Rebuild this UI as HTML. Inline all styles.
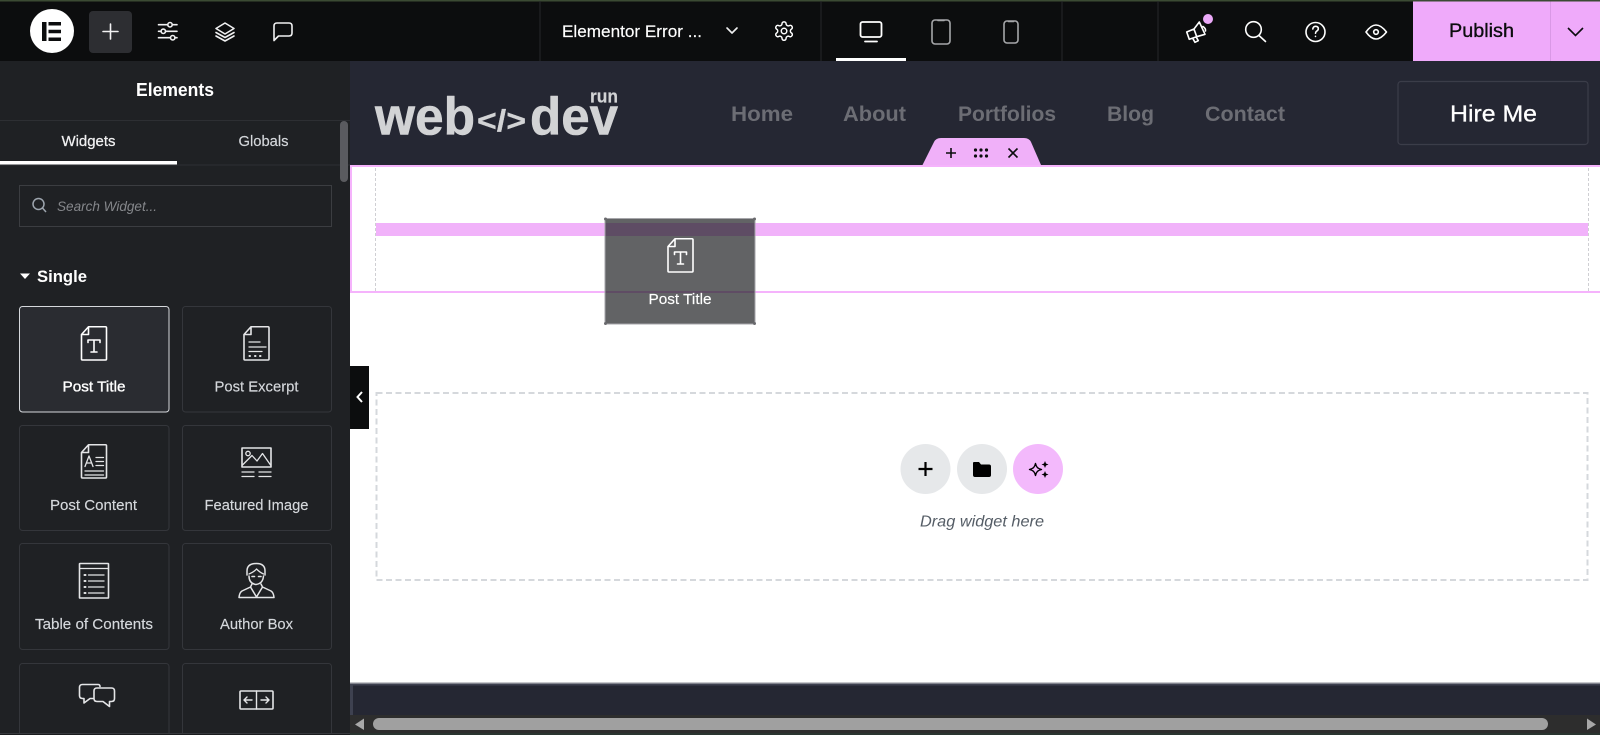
<!DOCTYPE html>
<html><head><meta charset="utf-8"><title>Elementor</title>
<style>
html,body{margin:0;padding:0;background:#fff;width:1600px;height:735px;overflow:hidden}
svg{display:block}
text{font-family:"Liberation Sans",sans-serif}
.i{fill:none;stroke:#e4e5e7;stroke-width:1.6;stroke-linecap:round;stroke-linejoin:round}
.t{fill:#1f2124;stroke:#34363b;stroke-width:1}
.l{font-size:15px;fill:#d5d8dc;text-anchor:middle;stroke:#d5d8dc;stroke-width:.15px}
.n{font-size:21px;font-weight:bold;fill:#6c6d74}
.logo{font-weight:bold;fill:#d2d3d5;stroke:#d2d3d5;stroke-width:.6px;stroke-linejoin:round}
</style></head><body>
<svg width="1600" height="735" viewBox="0 0 1600 735" xmlns="http://www.w3.org/2000/svg">
<defs>
<path id="doc" d="M8 .75H25a1 1 0 0 1 1 1V33a1 1 0 0 1-1 1H2a1 1 0 0 1-1-1V8.500ZM8 .75V8.500H1"/>
<path id="tt" d="M7.500 16.500V14H19.500V16.500M13.500 14V26M10.500 26H16.500"/>
</defs>

<!-- canvas -->
<rect width="1600" height="735" fill="#fff"/>
<rect x="350" y="61" width="1250" height="104" fill="#252733"/>

<!-- logo -->
<text class="logo" x="375" y="134.500" font-size="53" textLength="100" lengthAdjust="spacingAndGlyphs">web</text>
<text class="logo" x="477" y="131" font-size="31" textLength="49" lengthAdjust="spacingAndGlyphs" style="stroke-width:.3px">&lt;/&gt;</text>
<text class="logo" x="530" y="134.500" font-size="53" textLength="88" lengthAdjust="spacingAndGlyphs">dev</text>
<text class="logo" x="590" y="102.500" font-size="18" textLength="28" lengthAdjust="spacingAndGlyphs" style="stroke-width:.2px">run</text>

<!-- nav -->
<text class="n" x="731" y="121" textLength="62" lengthAdjust="spacingAndGlyphs">Home</text>
<text class="n" x="843" y="121" textLength="63" lengthAdjust="spacingAndGlyphs">About</text>
<text class="n" x="958" y="121" textLength="98" lengthAdjust="spacingAndGlyphs">Portfolios</text>
<text class="n" x="1107" y="121" textLength="47" lengthAdjust="spacingAndGlyphs">Blog</text>
<text class="n" x="1205" y="121" textLength="80" lengthAdjust="spacingAndGlyphs">Contact</text>
<rect x="1398" y="81.500" width="190" height="63" rx="3" fill="none" stroke="#3b3d49" stroke-width="1.200"/>
<text x="1450" y="121.500" font-size="23" fill="#fff" stroke="#fff" stroke-width=".3" textLength="87" lengthAdjust="spacingAndGlyphs">Hire Me</text>

<!-- section -->
<rect x="350" y="165" width="1250" height="2" fill="#f5b3fc"/>
<rect x="350" y="165" width="2" height="128" fill="#f5b3fc"/>
<rect x="350" y="291" width="1250" height="2" fill="#f5b3fc"/>
<path d="M375.500 168V291M1588.500 168V291" stroke="#cfcfd3" stroke-width="1" stroke-dasharray="3 2"/>
<rect x="376" y="223" width="1212" height="13" fill="#f1b2fa"/>
<path d="M922.500 165L934 142Q936 138 941 138H1024Q1029 138 1031 142L1041 165Z" fill="#f0b0f9"/>
<path d="M951 148V158M946 153H956M1008.500 148.500L1017.500 157.500M1017.500 148.500L1008.500 157.500" stroke="#0c0d0e" stroke-width="1.600" fill="none"/>
<g fill="#0c0d0e"><circle cx="975.500" cy="150" r="1.600"/><circle cx="981" cy="150" r="1.600"/><circle cx="986.500" cy="150" r="1.600"/><circle cx="975.500" cy="156" r="1.600"/><circle cx="981" cy="156" r="1.600"/><circle cx="986.500" cy="156" r="1.600"/></g>

<!-- empty section -->
<rect x="376.500" y="393" width="1211" height="187" fill="none" stroke="#d5d8dc" stroke-width="2" stroke-dasharray="6 3.500"/>
<circle cx="925.500" cy="469" r="25" fill="#e6e8ea"/>
<circle cx="982" cy="469" r="25" fill="#e6e8ea"/>
<circle cx="1038" cy="469" r="25" fill="#f3b9fc"/>
<path d="M925.500 462V476M918.500 469H932.500" stroke="#000" stroke-width="2.200" fill="none"/>
<path d="M973 463a1 1 0 0 1 1-1h5l2 2.500h8a2 2 0 0 1 2 2V475a2 2 0 0 1-2 2H975a2 2 0 0 1-2-2Z" fill="#000"/>
<path d="M1035.500 463.500C1036.300 467 1037.500 468.500 1041.500 469.500C1037.500 470.500 1036.300 472 1035.500 475.500C1034.700 472 1033.500 470.500 1029.500 469.500C1033.500 468.500 1034.700 467 1035.500 463.500Z" fill="none" stroke="#000" stroke-width="1.400" stroke-linejoin="round"/>
<path d="M1045 461l1 2.500 2.500 1-2.500 1-1 2.500-1-2.500-2.500-1 2.500-1ZM1045 471l1 2.500 2.500 1-2.500 1-1 2.500-1-2.500-2.500-1 2.500-1Z" fill="#000"/>
<text x="982" y="526.500" font-size="16" font-style="italic" fill="#555d66" text-anchor="middle" textLength="124" lengthAdjust="spacingAndGlyphs">Drag widget here</text>

<!-- bottom -->
<rect x="350" y="682" width="1250" height="33" fill="#252733"/>
<rect x="350" y="682" width="1250" height="1.500" fill="#c7c8cc"/>
<rect x="350" y="683.500" width="1250" height="2" fill="#3e4150"/>
<rect x="350" y="683.500" width="3" height="31.500" fill="#3e4150"/>
<rect x="350" y="715" width="1250" height="18" fill="#2d2d2d"/>
<rect x="373" y="718" width="1175" height="12" rx="6" fill="#a0a0a0"/>
<path d="M364 718.500V730L355 724.500Z" fill="#a8a8a8"/>
<path d="M1587 718.500V730L1596 724.500Z" fill="#a8a8a8"/>
<rect x="350" y="733" width="1250" height="2" fill="#2a3530"/>

<!-- ghost -->
<rect x="605" y="218.500" width="150" height="105.500" rx="2" fill="#1f2124" fill-opacity=".7" stroke="#a6a6aa" stroke-width="1"/>
<g fill="#6a6a6e"><circle cx="605.500" cy="219" r="1.500"/><circle cx="754.500" cy="219" r="1.500"/><circle cx="605.500" cy="323.500" r="1.500"/><circle cx="754.500" cy="323.500" r="1.500"/></g>
<g class="i" transform="translate(667 238)" style="stroke:#fff"><use href="#doc"/><use href="#tt"/></g>
<text class="l" x="680" y="304" textLength="63" lengthAdjust="spacingAndGlyphs" style="fill:#fff;stroke:#fff">Post Title</text>

<!-- top bar -->
<rect width="1600" height="61" fill="#0c0d0e"/>
<rect width="1600" height="1.500" fill="#3b4a33"/>
<path d="M540 1V61M821 1V61M1062 1V61M1158 1V61" stroke="#26282b" stroke-width="1"/>
<circle cx="52" cy="31" r="22" fill="#fff"/>
<path d="M42 22h4.500v19H42ZM48.500 22H61v3.500H48.500ZM48.500 29.700H61v3.600H48.500ZM48.500 37.500H61V41H48.500Z" fill="#0c0d0e"/>
<rect x="89" y="11" width="43" height="42" rx="4" fill="#2d2e32"/>
<path d="M110.500 24V39M103 31.500H118" class="i" style="stroke:#f2f2f3"/>
<g class="i" style="stroke:#f0f0f1">
<path d="M158.500 24.700H167.500M172.500 24.700H177M158.500 31.300H161M165.700 31.300H177M158.500 37.700H170.300M175 37.700H177"/>
<circle cx="170" cy="24.700" r="2.200"/><circle cx="163.300" cy="31.300" r="2.200"/><circle cx="172.700" cy="37.700" r="2.200"/>
<path d="M225 23L234 28.500L225 34L216 28.500ZM216 32.500L225 37.500L234 32.500M216 36L225 41L234 36"/>
<path d="M274 40.500V26Q274 23 277 23H289Q292 23 292 26V33Q292 36 289 36H278.500Z"/>
<path d="M727 28L732 33L737 28"/>
</g>
<text x="562" y="37" font-size="17" fill="#fff" stroke="#fff" stroke-width=".15" textLength="140" lengthAdjust="spacingAndGlyphs">Elementor Error ...</text>
<g class="i" transform="translate(773 20) scale(.92)" style="stroke:#fff"><path d="M12.220 2h-.44a2 2 0 0 0-2 2v.18a2 2 0 0 1-1 1.730l-.43.25a2 2 0 0 1-2 0l-.15-.08a2 2 0 0 0-2.730.73l-.22.38a2 2 0 0 0 .73 2.730l.15.1a2 2 0 0 1 1 1.720v.51a2 2 0 0 1-1 1.740l-.15.09a2 2 0 0 0-.73 2.730l.22.38a2 2 0 0 0 2.730.73l.15-.08a2 2 0 0 1 2 0l.43.25a2 2 0 0 1 1 1.730V20a2 2 0 0 0 2 2h.44a2 2 0 0 0 2-2v-.18a2 2 0 0 1 1-1.730l.43-.25a2 2 0 0 1 2 0l.15.08a2 2 0 0 0 2.730-.73l.22-.39a2 2 0 0 0-.73-2.730l-.15-.08a2 2 0 0 1-1-1.740v-.5a2 2 0 0 1 1-1.740l.15-.09a2 2 0 0 0 .73-2.730l-.22-.38a2 2 0 0 0-2.730-.73l-.15.08a2 2 0 0 1-2 0l-.43-.25a2 2 0 0 1-1-1.730V4a2 2 0 0 0-2-2z"/><circle cx="12" cy="12" r="3"/></g>
<!-- devices -->
<g class="i" style="stroke:#fff;stroke-width:1.800"><rect x="860.500" y="22" width="21" height="15" rx="2"/><path d="M865 41.500H877"/></g>
<rect x="836" y="58" width="70" height="3" fill="#fff"/>
<g class="i" style="stroke:#a6a7aa"><rect x="932" y="20" width="18" height="24" rx="3"/><path d="M938 20.500H944"/><rect x="1004" y="21" width="14" height="22" rx="3"/><path d="M1008.500 21.500H1013.500"/></g>
<!-- right icons -->
<g class="i" style="stroke:#fff">
<path d="M1186.700 32L1194 29L1196.700 36.700L1189.300 39.300ZM1194 29L1199.300 22L1205 34.300L1196.700 36.700M1192.700 38.300L1195 42.300L1198.300 40.700L1196 36.700M1203 26.500Q1206 28.500 1205.500 31"/>
<circle cx="1253.500" cy="29.500" r="7.800"/><path d="M1259 35.500L1265.500 41.500"/>
<circle cx="1315.500" cy="32" r="9.500"/><path d="M1312.800 29Q1313.300 26.300 1315.500 26.300Q1318.300 26.300 1318.300 28.800Q1318.300 30.300 1316.500 31.300Q1315.500 32 1315.500 33.200"/><path d="M1315.500 36.300V36.400"/>
<path d="M1366 32Q1371 25 1376 25Q1381 25 1386.500 32Q1381 39 1376 39Q1371 39 1366 32Z"/><circle cx="1376" cy="32" r="2.300"/>
</g>
<circle cx="1208" cy="19" r="5" fill="#eba9f8"/>
<rect x="1413" y="1.500" width="187" height="59.500" fill="#efaafa"/>
<rect x="1550" y="1.500" width="1" height="59.500" fill="#d998e6"/>
<text x="1449" y="37" font-size="19" fill="#0c0d0e" stroke="#0c0d0e" stroke-width=".35" textLength="65" lengthAdjust="spacingAndGlyphs">Publish</text>
<path d="M1568 28L1575.500 35.500L1583 28" fill="none" stroke="#0c0d0e" stroke-width="1.600"/>

<!-- side panel -->
<rect x="0" y="61" width="350" height="674" fill="#1f2124"/>
<text x="175" y="96" font-size="18" font-weight="bold" fill="#fff" text-anchor="middle" textLength="78" lengthAdjust="spacingAndGlyphs">Elements</text>
<rect y="120" width="350" height="1" fill="#2d2f33"/>
<rect y="164.500" width="350" height="1" fill="#2d2f33"/>
<rect y="161" width="177" height="3.500" fill="#fff"/>
<text x="88.500" y="146" font-size="15" fill="#f1f1f2" stroke="#f1f1f2" stroke-width=".25" text-anchor="middle" textLength="54" lengthAdjust="spacingAndGlyphs">Widgets</text>
<text x="263.500" y="146" font-size="15" fill="#d5d8dc" stroke="#d5d8dc" stroke-width=".15" text-anchor="middle" textLength="50" lengthAdjust="spacingAndGlyphs">Globals</text>
<rect x="340" y="121" width="8" height="61" rx="4" fill="#5a5b5f"/>
<rect x="19.500" y="185.500" width="312" height="41" fill="none" stroke="#3b3d41" stroke-width="1"/>
<circle cx="38.500" cy="204" r="5.500" fill="none" stroke="#9da5ae" stroke-width="1.500"/><path d="M42.500 208L46 212" stroke="#9da5ae" stroke-width="1.500"/>
<text x="57" y="211" font-size="14" font-style="italic" fill="#85878b" textLength="100" lengthAdjust="spacingAndGlyphs">Search Widget...</text>
<path d="M20 273.500H30L25 279Z" fill="#fff"/>
<text x="37" y="282" font-size="17" font-weight="bold" fill="#fff" textLength="50" lengthAdjust="spacingAndGlyphs">Single</text>

<!-- tiles -->
<rect class="t" x="19.500" y="306.500" width="149.500" height="105.500" rx="3" style="fill:#2a2c31;stroke:#d5d8dc"/>
<rect class="t" x="182.500" y="306.500" width="149" height="105.500" rx="3"/>
<rect class="t" x="19.500" y="425.500" width="149.500" height="105" rx="3"/>
<rect class="t" x="182.500" y="425.500" width="149" height="105" rx="3"/>
<rect class="t" x="19.500" y="543.500" width="149.500" height="106" rx="3"/>
<rect class="t" x="182.500" y="543.500" width="149" height="106" rx="3"/>
<rect class="t" x="19.500" y="663.500" width="149.500" height="85" rx="3"/>
<rect class="t" x="182.500" y="663.500" width="149" height="85" rx="3"/>

<text class="l" x="94" y="391.500" textLength="63" lengthAdjust="spacingAndGlyphs" style="fill:#fff;stroke:#fff;stroke-width:.35px">Post Title</text>
<text class="l" x="256.500" y="391.500" textLength="84" lengthAdjust="spacingAndGlyphs">Post Excerpt</text>
<text class="l" x="93.500" y="510" textLength="87" lengthAdjust="spacingAndGlyphs">Post Content</text>
<text class="l" x="256.500" y="510" textLength="104" lengthAdjust="spacingAndGlyphs">Featured Image</text>
<text class="l" x="94" y="629" textLength="118" lengthAdjust="spacingAndGlyphs">Table of Contents</text>
<text class="l" x="256.500" y="629" textLength="73" lengthAdjust="spacingAndGlyphs">Author Box</text>

<g class="i" transform="translate(80.500 326)" style="stroke:#fff"><use href="#doc"/><use href="#tt"/></g>
<g class="i" transform="translate(243 326)"><use href="#doc"/><path d="M6 16H17M6 21H23M6 25.500H19" stroke-width="1.300"/><path d="M6.500 30H7M12 30H12.500M17 30H17.500" stroke-width="2"/></g>
<g class="i" transform="translate(80.500 444)"><use href="#doc"/><path d="M4.500 22.500L8.500 12L12.500 22.500M6 19H11M15.500 13.500H23M15.500 17.500H23M15.500 21.500H23M4.500 27H23M4.500 31H23" stroke-width="1.300"/></g>
<g class="i">
<rect x="242" y="448" width="29" height="19"/>
<circle cx="248" cy="453.500" r="2.200" stroke-width="1.300"/>
<path d="M242.500 465L252 455.500L257 461L262.500 453.500L270.500 465" stroke-width="1.300"/>
<path d="M242 472H254M259 472H271M242 476.500H254M259 476.500H271" stroke-width="1.300"/>
<rect x="79.500" y="563.500" width="29" height="34.500" rx=".5"/>
<path d="M80 568.500H108M88.500 575H104M88.500 581H104M88.500 587H104M88.500 593H104" stroke-width="1.300"/>
<path d="M84.500 575H85.500M84.500 581H85.500M84.500 587H85.500M84.500 593H85.500" stroke-width="2"/>
<path d="M247 575V571Q247 563.500 256.500 563.500Q265 563.500 265 571V575M249 576Q249 583.500 256 584.500Q263 583.500 263.500 576" stroke-width="1.500"/>
<path d="M249 574Q254 572 256.500 569Q260 572.500 263.500 574" stroke-width="1.300"/>
<path d="M252 576.500H254.500M258.500 576.500H261" stroke-width="1.600"/>
<path d="M252 584L250.500 587L242 591Q239.500 592.500 239 597.500H274Q273.500 592.500 271 591L262.500 587L261 584M250.500 587L256.500 597M262.500 587L256.500 597" stroke-width="1.500"/>
<path d="M100 686.500Q100 684.500 98 684.500H82.500Q79.500 684.500 79.500 687.500V695.500Q79.500 698.500 82.500 698.500H84L84 703L90 698.500H93"/>
<path d="M97 688H111.500Q114.500 688 114.500 691V698.500Q114.500 701.500 111.500 701.500H109.500V706.500L103 701.500H97Q94 701.500 94 698.500V691Q94 688 97 688Z"/>
<rect x="240" y="691" width="33" height="18" rx="1"/>
<path d="M256.500 691V709M252 700H244M247 697L244 700L247 703M261 700H269M266 697L269 700L266 703" stroke-width="1.400"/>
</g>
<rect x="0" y="733" width="350" height="1" fill="#36383c"/>
<rect x="0" y="734" width="350" height="1" fill="#1a1c1e"/>

<!-- collapse -->
<rect x="350" y="366" width="19" height="63" fill="#0c0d0e"/>
<path d="M362 392L357.500 397L362 402" fill="none" stroke="#fff" stroke-width="2"/>
</svg>
</body></html>
